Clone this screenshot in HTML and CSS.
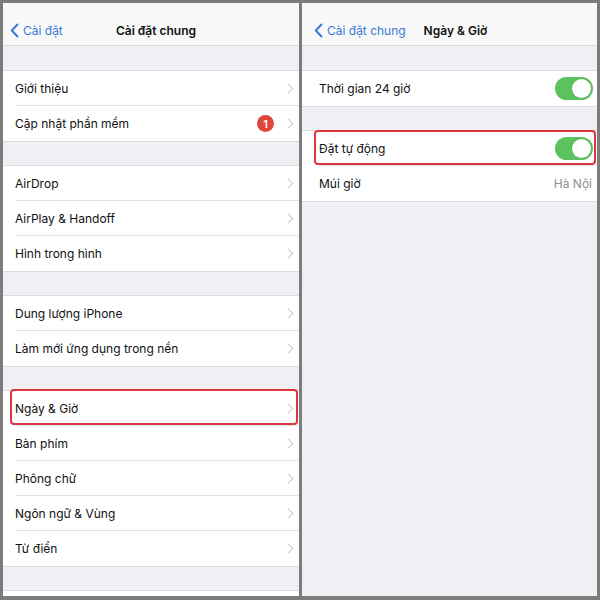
FILE: index.html
```html
<!DOCTYPE html>
<html lang="vi">
<head>
<meta charset="utf-8">
<link rel="stylesheet" href="styles.css">
</head>
<body>
<div class="frame">
  <section class="panel">
    <header class="nav">
      <div class="back">
        <svg class="back-chev" width="9" height="15" viewBox="0 0 9 15"><polyline points="7.5,1.5 1.8,7.5 7.5,13.5" fill="none" stroke="#3a7bd5" stroke-width="2" stroke-linecap="round" stroke-linejoin="round"/></svg>
        <span>Cài đặt</span>
      </div>
      <div class="title">Cài đặt chung</div>
    </header>
    <div class="group">
      <div class="row"><span class="label">Giới thiệu</span><span class="chev"></span></div>
      <div class="row"><span class="label">Cập nhật phần mềm</span><span class="badge">1</span><span class="chev"></span></div>
    </div>
    <div class="group">
      <div class="row"><span class="label">AirDrop</span><span class="chev"></span></div>
      <div class="row"><span class="label">AirPlay &amp; Handoff</span><span class="chev"></span></div>
      <div class="row"><span class="label">Hình trong hình</span><span class="chev"></span></div>
    </div>
    <div class="group">
      <div class="row"><span class="label">Dung lượng iPhone</span><span class="chev"></span></div>
      <div class="row"><span class="label">Làm mới ứng dụng trong nền</span><span class="chev"></span></div>
    </div>
    <div class="group">
      <div class="row hl hl-left"><span class="label">Ngày &amp; Giờ</span><span class="chev"></span></div>
      <div class="row"><span class="label">Bàn phím</span><span class="chev"></span></div>
      <div class="row"><span class="label">Phông chữ</span><span class="chev"></span></div>
      <div class="row"><span class="label">Ngôn ngữ &amp; Vùng</span><span class="chev"></span></div>
      <div class="row"><span class="label">Từ điển</span><span class="chev"></span></div>
    </div>
    <div class="group">
      <div class="row"><span class="label">&nbsp;</span></div>
    </div>
  </section>
  <section class="panel panel-right">
    <header class="nav">
      <div class="back">
        <svg class="back-chev" width="9" height="15" viewBox="0 0 9 15"><polyline points="7.5,1.5 1.8,7.5 7.5,13.5" fill="none" stroke="#3a7bd5" stroke-width="2" stroke-linecap="round" stroke-linejoin="round"/></svg>
        <span>Cài đặt chung</span>
      </div>
      <div class="title">Ngày &amp; Giờ</div>
    </header>
    <div class="group">
      <div class="row"><span class="label">Thời gian 24 giờ</span><span class="toggle"><span class="knob"></span></span></div>
    </div>
    <div class="group">
      <div class="row hl hl-right"><span class="label">Đặt tự động</span><span class="toggle"><span class="knob"></span></span></div>
      <div class="row"><span class="label">Múi giờ</span><span class="value">Hà Nội</span></div>
    </div>
  </section>
</div>
</body>
</html>
```

FILE: styles.css
```css
* { box-sizing: border-box; }
html, body { margin: 0; padding: 0; }
body {
  width: 600px;
  height: 600px;
  background: #7c7c7c;
  font-family: Inter, "Noto Sans", sans-serif;
  color: #111;
  overflow: hidden;
}
.frame {
  display: flex;
  gap: 3px;
  padding: 3px 3px 4px 3px;
  height: 600px;
}
.panel {
  flex: 0 0 296px;
  height: 593px;
  background: #efeff4;
  overflow: hidden;
  display: flex;
  flex-direction: column;
}
.panel-right { flex-basis: 295px; }
.nav {
  height: 43px;
  flex: 0 0 43px;
  background: #f8f8f8;
  border-bottom: 1px solid #d9d9dc;
  position: relative;
  display: flex;
  align-items: center;
  padding: 13px 0 0 7px;
}
.panel-right .nav { padding-left: 12px; }
.back {
  display: flex;
  align-items: center;
  gap: 4px;
  color: #3a7bd5;
  font-size: 12px;
}
.back-chev { display: block; }
.title {
  position: absolute;
  left: 0;
  right: 0;
  top: 13px;
  bottom: 0;
  display: flex;
  align-items: center;
  justify-content: center;
  padding-left: 10px;
  font-weight: 600;
  font-size: 12px;
  color: #111;
  pointer-events: none;
}
.panel-right .title { padding-left: 12px; }
.group {
  margin-top: 25px;
  background: #fff;
  box-shadow: 0 -1px 0 #dcdcdf, 0 1px 0 #dcdcdf;
  flex: 0 0 auto;
}
.row {
  height: 35px;
  display: flex;
  align-items: center;
  padding: 0 6px 0 12px;
  position: relative;
  font-size: 12px;
}
.panel-right .row { padding-left: 17px; }
.row::before {
  content: "";
  position: absolute;
  left: 12px;
  right: 0;
  bottom: 0;
  height: 1px;
  background: #e1e1e4;
}
.panel-right .row::before { left: 17px; }
.row:last-child::before { display: none; }
.label { flex: 1; }
.chev {
  width: 7px;
  height: 7px;
  border-top: 1.5px solid #c7c7cc;
  border-right: 1.5px solid #c7c7cc;
  transform: rotate(45deg);
  margin-right: 1px;
}
.badge {
  width: 17px;
  height: 17px;
  border-radius: 50%;
  background: #e0453a;
  color: #fff;
  font-size: 11px;
  font-weight: 600;
  display: flex;
  align-items: center;
  justify-content: center;
  margin-right: 11px;
}
.value {
  color: #8e8e93;
  font-size: 12px;
  margin-right: -1px;
}
.toggle {
  width: 38px;
  height: 23px;
  border-radius: 12px;
  background: #5cc25e;
  position: relative;
  margin-right: -2px;
}
.knob {
  position: absolute;
  right: 2px;
  top: 2px;
  width: 19px;
  height: 19px;
  border-radius: 50%;
  background: #fff;
  box-shadow: 0 0 1px rgba(0,0,0,0.25);
}
.hl::after {
  content: "";
  position: absolute;
  top: -2px;
  bottom: 1px;
  border: 2px solid #d8373d;
  border-radius: 4px;
}
.hl-left::after { left: 7px; right: 1px; }
.hl-right::after { left: 12px; right: 1px; top: -1px; }
```
